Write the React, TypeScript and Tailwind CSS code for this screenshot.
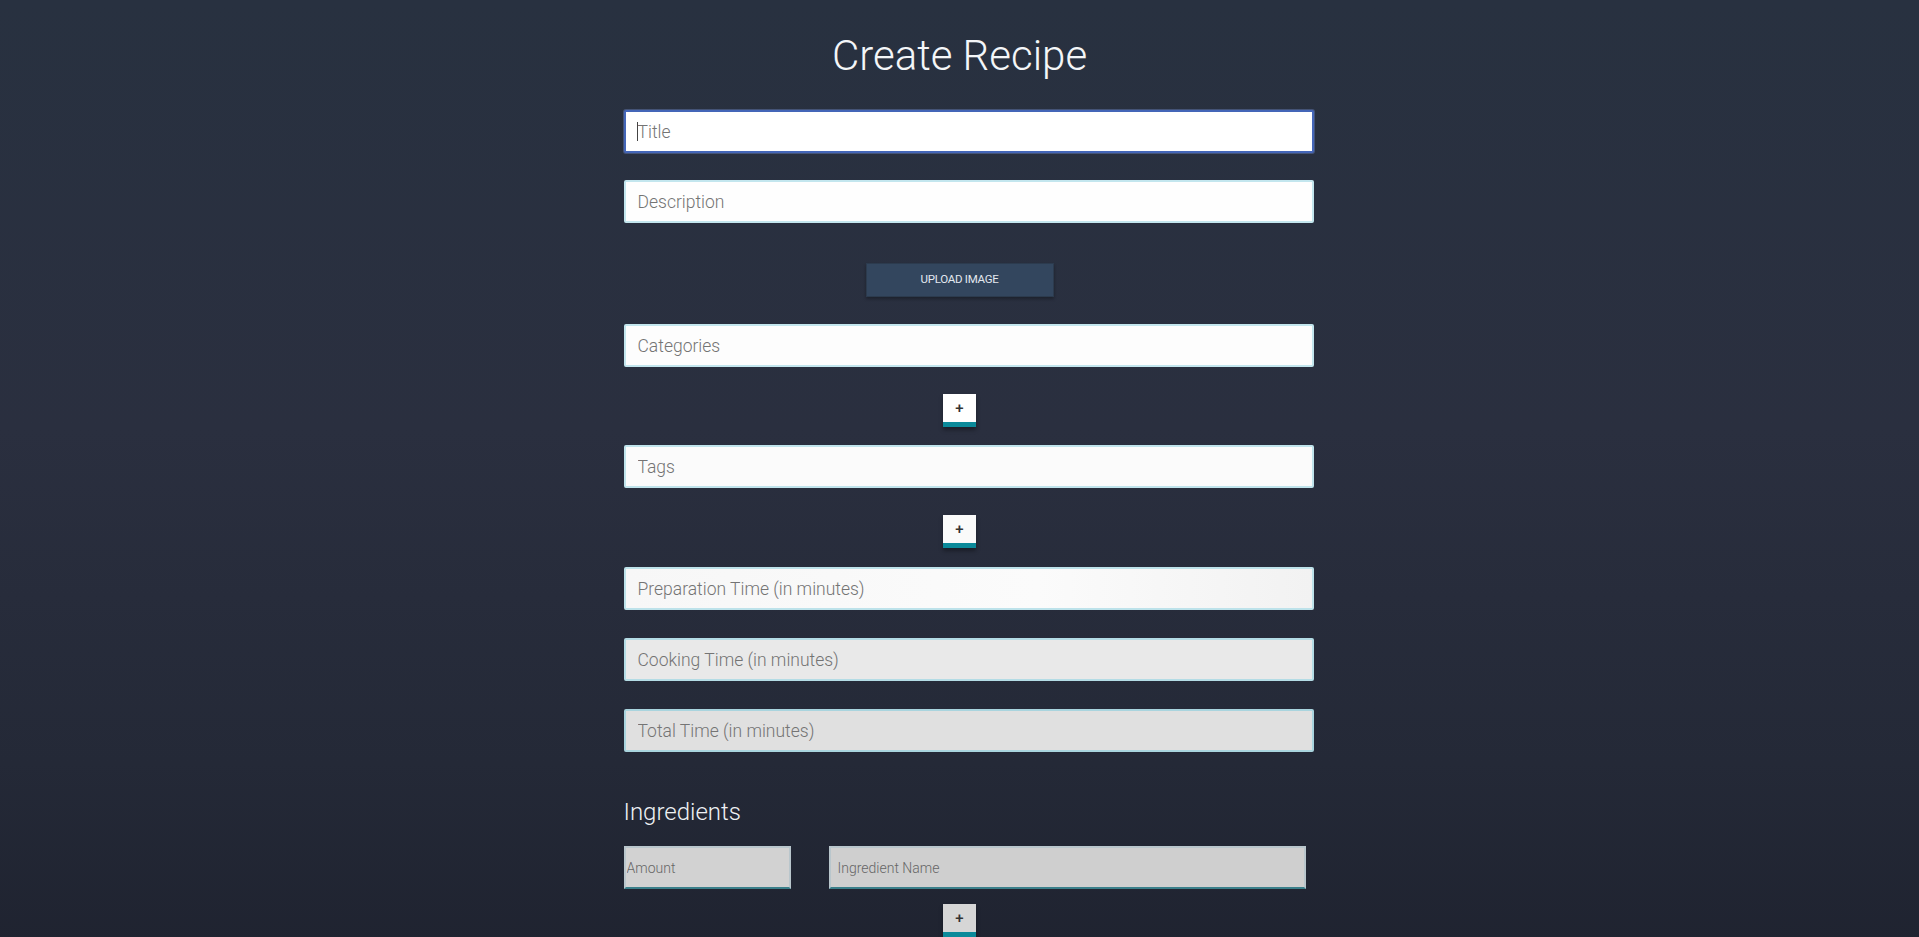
import React from "react";

type FieldProps = {
  placeholder: string;
  className: string;
};

// plain text field, width runs 18px past the column like the original form
const Field: React.FC<FieldProps> = ({ placeholder, className }) => {
  return (
    <input
      type="text"
      placeholder={placeholder}
      className={`block h-[43px] w-[690px] shrink-0 rounded-[2px] border-2 px-[12px] text-[17.5px] font-light text-[#333] outline-none placeholder:text-[#747474] ${className}`}
    />
  );
};

const PlusButton: React.FC<{ className: string }> = ({ className }) => {
  return (
    <button
      type="button"
      className={`mx-auto flex h-[33px] w-[33px] items-center justify-center border-b-[5px] border-[#0b8a9a] text-[15px] font-medium leading-none text-[#333] shadow-[0_3px_4px_rgba(0,0,0,0.35)] ${className}`}
    >
      +
    </button>
  );
};

export default function App() {
  return (
    <div className="min-h-screen w-full bg-[linear-gradient(180deg,#283140_0%,#2a2f3f_45%,#242937_80%,#1f2330_100%)] font-['Roboto','Liberation_Sans',sans-serif] text-white">
      <div className="mx-auto flex w-[672px] flex-col pt-[31px] pb-4">
        <h1 className="text-center text-[42px] leading-[49px] font-light text-[#f4f6f8]">Create Recipe</h1>

        <div className="relative mt-[30px]">
          <Field
            placeholder="Title"
            className="border-[#4466b8] bg-white shadow-[0_0_0_1px_rgba(120,150,220,0.35)]"
          />
          <span className="absolute left-[13px] top-[12px] h-[19px] w-px bg-[#444]"></span>
        </div>

        <div className="mt-[27px]">
          <Field placeholder="Description" className="border-[#c3e6ee] bg-[#fefefe]" />
        </div>

        <button
          type="button"
          className="mx-auto mt-[40px] h-[34px] w-[188px] border border-[#2c3b4e] bg-[#33465e] text-[11.5px] font-normal uppercase tracking-tight text-[#e2e8ef] shadow-[0_2px_3px_rgba(0,0,0,0.3)]"
        >
          Upload Image
        </button>

        <div className="mt-[27px]">
          <Field placeholder="Categories" className="border-[#c3e6ee] bg-[#fdfdfd]" />
        </div>

        <div className="mt-[27px]">
          <PlusButton className="bg-white" />
        </div>

        <div className="mt-[18px]">
          <Field placeholder="Tags" className="border-[#c0e4ec] bg-[#fbfbfb]" />
        </div>

        <div className="mt-[27px]">
          <PlusButton className="bg-[#fafafa]" />
        </div>

        <div className="mt-[19px]">
          <Field
            placeholder="Preparation Time (in minutes)"
            className="border-[#bde2ea] bg-[linear-gradient(90deg,#f7f7f7,#fbfbfb_60%,#f2f2f2)]"
          />
        </div>

        <div className="mt-[28px]">
          <Field placeholder="Cooking Time (in minutes)" className="border-[#b4dce5] bg-[#e9e9e9]" />
        </div>

        <div className="mt-[28px]">
          <Field placeholder="Total Time (in minutes)" className="border-[#a9d4de] bg-[#e0e0e0]" />
        </div>

        <h2 className="mt-[46px] text-[24px] leading-[28px] font-light text-[#eef1f4]">Ingredients</h2>

        <div className="mt-[20px] flex gap-[38px]">
          <input
            type="text"
            placeholder="Amount"
            className="block h-[43px] w-[167px] shrink-0 border-2 border-[#b9c6cc] border-b-[#3a7f8a] bg-[#d2d2d2] px-[1px] text-[14px] font-light text-[#333] outline-none placeholder:text-[#666]"
          />
          <input
            type="text"
            placeholder="Ingredient Name"
            className="block h-[43px] w-[477px] shrink-0 border-2 border-[#b9c6cc] border-b-[#3a7f8a] bg-[#cfcfcf] px-[7px] text-[14px] font-light text-[#333] outline-none placeholder:text-[#666]"
          />
        </div>

        <div className="mt-[15px]">
          <PlusButton className="bg-[#d6d6d6]" />
        </div>
      </div>
    </div>
  );
}
